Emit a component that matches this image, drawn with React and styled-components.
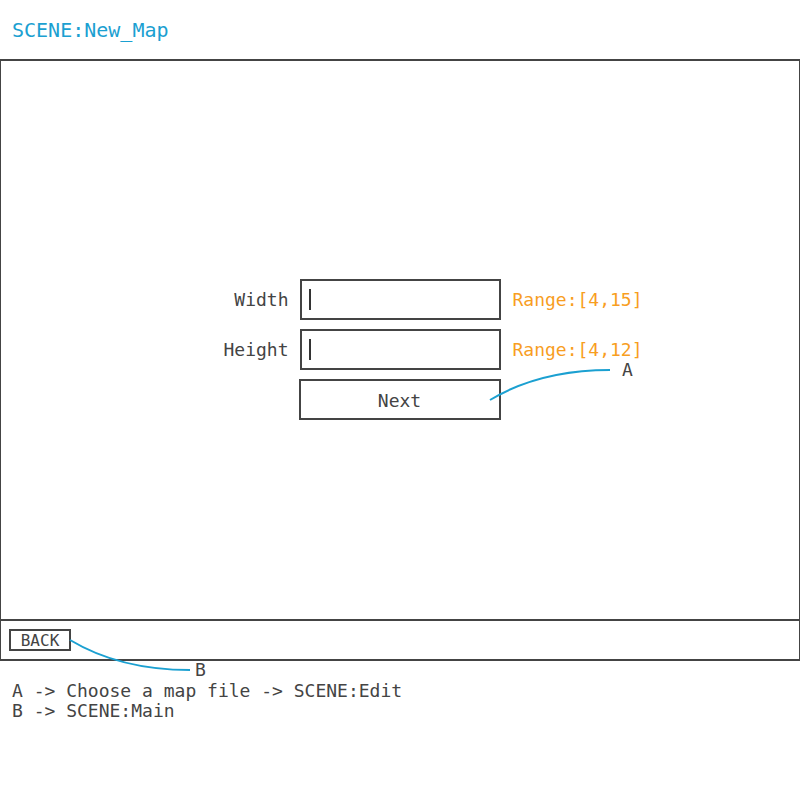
import React from 'react';
import styled, { createGlobalStyle } from 'styled-components';

const GlobalStyle = createGlobalStyle`
  html, body {
    margin: 0;
    padding: 0;
    background: #fff;
  }
  body {
    font-family: "DejaVu Sans Mono", "Liberation Mono", monospace;
    color: #444;
  }
`;

const App = () => {
  return (
    <Page>
      <GlobalStyle />
      <Header>
        <Title>SCENE:New_Map</Title>
      </Header>
      <Frame>
        <Form>
          <Label>Width</Label>
          <InputBox><Caret /></InputBox>
          <Range>Range:[4,15]</Range>

          <Label>Height</Label>
          <InputBox><Caret /></InputBox>
          <Range>Range:[4,12]</Range>

          <span />
          <NextButton>Next</NextButton>
          <span />
        </Form>
      </Frame>
      <BottomBar>
        <BackButton>BACK</BackButton>
      </BottomBar>
      <Notes>
        <NoteLine>A -&gt; Choose a map file -&gt; SCENE:Edit</NoteLine>
        <NoteLine>B -&gt; SCENE:Main</NoteLine>
      </Notes>

      {/* annotation layer: connectors drawn over the mockup */}
      <Overlay width="800" height="800" viewBox="0 0 800 800">
        <path d="M490 400 Q 540 370 610 370" fill="none" stroke="#1ba0d1" strokeWidth="2" />
        <path d="M70 640 Q 120 670 190 670" fill="none" stroke="#1ba0d1" strokeWidth="2" />
      </Overlay>
      <Marker left={622} top={360}>A</Marker>
      <Marker left={195} top={660}>B</Marker>
    </Page>
  );
};

export default App;

const Page = styled.div`
  position: relative;
  width: 800px;
  height: 800px;
  overflow: hidden;
`;

const Header = styled.div`
  height: 59px;
  display: flex;
  align-items: center;
  padding-left: 12px;
  box-sizing: border-box;
`;

const Title = styled.div`
  font-size: 20px;
  color: #1ba0d1;
`;

const Frame = styled.div`
  height: 562px;
  box-sizing: border-box;
  margin: 0 -1px;
  border: 2px solid #444;
  display: flex;
  justify-content: center;
  padding-top: 218px;
`;

const Form = styled.div`
  display: grid;
  grid-template-columns: 1fr 201px 1fr;
  grid-auto-rows: 41px;
  row-gap: 9px;
  column-gap: 11px;
  width: 800px;
  align-items: center;
`;

const Label = styled.div`
  font-size: 18px;
  color: #444;
  text-align: right;
`;

const InputBox = styled.div`
  height: 41px;
  box-sizing: border-box;
  border: 2px solid #444;
  display: flex;
  align-items: center;
  padding-left: 7px;
`;

const Caret = styled.div`
  width: 2px;
  height: 21px;
  background: #333;
`;

const Range = styled.div`
  font-size: 18px;
  color: #f89e1f;
  margin-left: 1px;
`;

const NextButton = styled.div`
  height: 41px;
  margin-left: -1px;
  padding-top: 2px;
  box-sizing: border-box;
  border: 2px solid #444;
  display: flex;
  align-items: center;
  justify-content: center;
  font-size: 18px;
  color: #444;
`;

const BottomBar = styled.div`
  height: 40px;
  box-sizing: border-box;
  margin: 0 -1px;
  border: 2px solid #444;
  border-top: none;
  display: flex;
  align-items: flex-start;
  padding: 8px 0 0 8px;
`;

const BackButton = styled.div`
  width: 62px;
  height: 22px;
  box-sizing: border-box;
  border: 2px solid #444;
  display: flex;
  align-items: center;
  justify-content: center;
  font-size: 16px;
  color: #444;
`;

const Notes = styled.div`
  padding: 20px 0 0 12px;
`;

const NoteLine = styled.div`
  font-size: 18px;
  line-height: 20px;
  color: #444;
  white-space: pre;
`;

const Overlay = styled.svg`
  position: absolute;
  left: 0;
  top: 0;
  pointer-events: none;
`;

const Marker = styled.div`
  position: absolute;
  left: ${({ left }) => left}px;
  top: ${({ top }) => top}px;
  font-size: 18px;
  line-height: 20px;
  color: #444;
`;
